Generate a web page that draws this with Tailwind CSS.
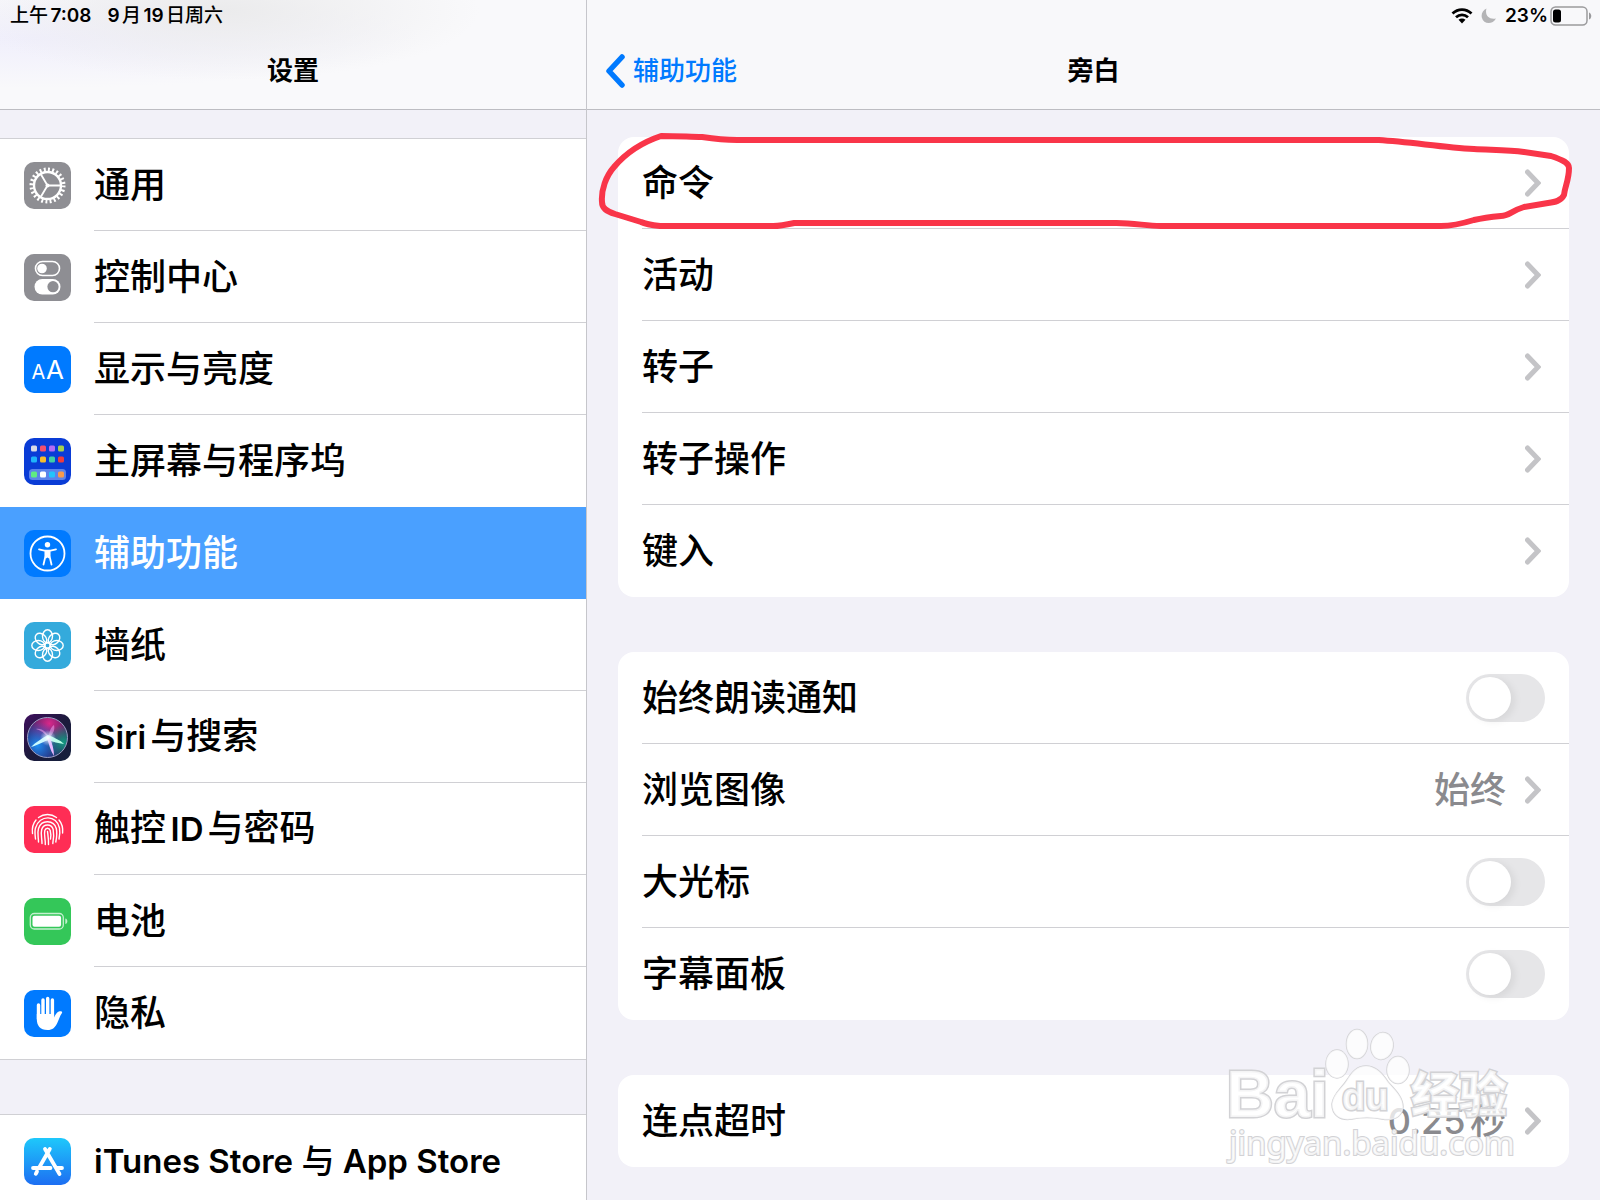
<!DOCTYPE html>
<html lang="zh-CN">
<head>
  <meta charset="UTF-8">
  <meta name="viewport" content="width=device-width, initial-scale=1.0">
  <title>设置</title>
  <script src="https://cdn.jsdelivr.net/npm/@tailwindcss/browser@4"></script>
</head>
<body class="bg-[#f2f1f8] text-black font-medium font-[Inter,'Noto_Sans_CJK_SC',sans-serif] [text-autospace:normal]">
  <div class="flex h-screen overflow-hidden">

    <!-- sidebar -->
    <aside class="w-[587px] shrink-0 flex flex-col border-r border-[#c6c6cb]">
      <header class="h-[110px] shrink-0 border-b border-[#bdbdc2] bg-[#f9f9fb] bg-[radial-gradient(ellipse_at_38%_10%,#ebebec,transparent_50%),radial-gradient(ellipse_at_5%_35%,#f0effc,transparent_50%)]">
        <div class="h-8 px-[10px] flex items-center gap-4 text-[19px] leading-8">
          <span>上午<span class="font-semibold">7:08</span></span>
          <span><span class="font-semibold">9</span>月<span class="font-semibold">19</span>日周六</span>
        </div>
        <h1 class="h-[77px] text-center text-[26px] leading-[77px] font-bold">设置</h1>
      </header>

      <nav class="flex flex-col pt-7 text-[36px] leading-[52px]">
        <ul class="bg-white border-y border-[#d0d0d4]">
          <li>
            <a href="#" class="flex items-center h-[92px] pl-6 gap-[23px]">
              <svg class="size-[47px] shrink-0" viewBox="0 0 47 47">
                <rect width="47" height="47" rx="10" fill="#8e8e93"/>
                <g fill="none" stroke="#fff">
                  <circle cx="23.500" cy="23.500" r="16" stroke-width="4" stroke-dasharray="1.900 2.289"/>
                  <circle cx="23.500" cy="23.500" r="13.500" stroke-width="2.400"/>
                  <path d="M23.500 23.500H36M23.500 23.500L17 12.500M23.500 23.500L17 34.500" stroke-width="1.800"/>
                </g>
                <circle cx="23.500" cy="23.500" r="2" fill="#fff"/>
              </svg>
              <span class="flex-1 h-full flex items-center border-b border-[#d0d0d4]">通用</span>
            </a>
          </li>
          <li>
            <a href="#" class="flex items-center h-[92px] pl-6 gap-[23px]">
              <svg class="size-[47px] shrink-0" viewBox="0 0 47 47">
                <rect width="47" height="47" rx="10" fill="#8e8e93"/>
                <rect x="11.500" y="7.500" width="24" height="14" rx="7" fill="none" stroke="#fff" stroke-width="1.600"/>
                <circle cx="18" cy="14.500" r="4.800" fill="#fff"/>
                <rect x="10.500" y="25" width="26" height="15.500" rx="7.700" fill="#fff"/>
                <circle cx="29" cy="32.700" r="5.600" fill="#8e8e93"/>
              </svg>
              <span class="flex-1 h-full flex items-center border-b border-[#d0d0d4]">控制中心</span>
            </a>
          </li>
          <li>
            <a href="#" class="flex items-center h-[92px] pl-6 gap-[23px]">
              <svg class="size-[47px] shrink-0" viewBox="0 0 47 47">
                <rect width="47" height="47" rx="10" fill="#007aff"/>
                <text x="7.500" y="33" fill="#fff" font-family="Inter" font-size="20" font-weight="400">A</text>
                <text x="22" y="33" fill="#fff" font-family="Inter" font-size="26" font-weight="400">A</text>
              </svg>
              <span class="flex-1 h-full flex items-center border-b border-[#d0d0d4]">显示与亮度</span>
            </a>
          </li>
          <li>
            <a href="#" class="flex items-center h-[92px] pl-6 gap-[23px]">
              <svg class="size-[47px] shrink-0" viewBox="0 0 47 47">
                <rect width="47" height="47" rx="10" fill="#0a3cd6"/>
                <rect x="5" y="31" width="37" height="11" rx="3.500" fill="#5b83ea"/>
                <rect x="7" y="7.500" width="6" height="6" rx="1.500" fill="#d9dbe6"/>
                <rect x="16" y="7.500" width="6" height="6" rx="1.500" fill="#f2506f"/>
                <rect x="25" y="7.500" width="6" height="6" rx="1.500" fill="#b36bf5"/>
                <rect x="34" y="7.500" width="6" height="6" rx="1.500" fill="#a6d14e"/>
                <rect x="7" y="18.500" width="6" height="6" rx="1.500" fill="#1fb4fa"/>
                <rect x="16" y="18.500" width="6" height="6" rx="1.500" fill="#f6bd2c"/>
                <rect x="25" y="18.500" width="6" height="6" rx="1.500" fill="#3fd0a4"/>
                <rect x="34" y="18.500" width="6" height="6" rx="1.500" fill="#f03c3c"/>
                <rect x="7" y="33.500" width="6" height="6" rx="1.500" fill="#5fec82"/>
                <rect x="16" y="33.500" width="6" height="6" rx="1.500" fill="#fff"/>
                <rect x="25" y="33.500" width="6" height="6" rx="1.500" fill="#22c4fb"/>
                <rect x="34" y="33.500" width="6" height="6" rx="1.500" fill="#f79a4b"/>
              </svg>
              <span>主屏幕与程序坞</span>
            </a>
          </li>
          <li>
            <a href="#" aria-current="page" class="flex items-center h-[92px] pl-6 gap-[23px] bg-[#4aa0ff] text-white">
              <svg class="size-[47px] shrink-0" viewBox="0 0 47 47">
                <rect width="47" height="47" rx="10" fill="#007aff"/>
                <circle cx="23.500" cy="23.500" r="17" fill="none" stroke="#fff" stroke-width="1.800"/>
                <circle cx="23.500" cy="14.700" r="2.700" fill="#fff"/>
                <path d="M15 19.300L21.500 20.800V26L19.500 34.500M32 19.300L25.500 20.800V26L27.500 34.500" fill="none" stroke="#fff" stroke-width="1.800" stroke-linecap="round" stroke-linejoin="round"/>
                <path d="M20.800 19.800H26.200V27L25 28.500L23.500 27.500L22 28.500L20.800 27Z" fill="#fff"/>
              </svg>
              <span>辅助功能</span>
            </a>
          </li>
          <li>
            <a href="#" class="flex items-center h-[92px] pl-6 gap-[23px]">
              <svg class="size-[47px] shrink-0" viewBox="0 0 47 47">
                <rect width="47" height="47" rx="10" fill="#34aadc"/>
                <g fill="none" stroke="#fff" stroke-width="1.400">
                  <ellipse cx="23.500" cy="14.300" rx="5" ry="6.500"/>
                  <ellipse cx="23.500" cy="14.300" rx="5" ry="6.500" transform="rotate(45 23.500 23.500)"/>
                  <ellipse cx="23.500" cy="14.300" rx="5" ry="6.500" transform="rotate(90 23.500 23.500)"/>
                  <ellipse cx="23.500" cy="14.300" rx="5" ry="6.500" transform="rotate(135 23.500 23.500)"/>
                  <ellipse cx="23.500" cy="14.300" rx="5" ry="6.500" transform="rotate(180 23.500 23.500)"/>
                  <ellipse cx="23.500" cy="14.300" rx="5" ry="6.500" transform="rotate(225 23.500 23.500)"/>
                  <ellipse cx="23.500" cy="14.300" rx="5" ry="6.500" transform="rotate(270 23.500 23.500)"/>
                  <ellipse cx="23.500" cy="14.300" rx="5" ry="6.500" transform="rotate(315 23.500 23.500)"/>
                  <circle cx="23.500" cy="23.500" r="2.700"/>
                </g>
              </svg>
              <span class="flex-1 h-full flex items-center border-b border-[#d0d0d4]">墙纸</span>
            </a>
          </li>
          <li>
            <a href="#" class="flex items-center h-[92px] pl-6 gap-[23px]">
              <svg class="size-[47px] shrink-0" viewBox="0 0 47 47">
                <defs>
                  <linearGradient id="siriBg" x1="0" y1="0" x2="1" y2="1">
                    <stop offset="0" stop-color="#3f0f5e"/>
                    <stop offset="0.500" stop-color="#1c1a3c"/>
                    <stop offset="1" stop-color="#14203c"/>
                  </linearGradient>
                  <radialGradient id="siriPink" cx="0.550" cy="0.150" r="0.600">
                    <stop offset="0" stop-color="#d8288a"/>
                    <stop offset="1" stop-color="#d8288a" stop-opacity="0"/>
                  </radialGradient>
                  <radialGradient id="siriBlue" cx="0.250" cy="0.700" r="0.600">
                    <stop offset="0" stop-color="#1e8ff0"/>
                    <stop offset="1" stop-color="#1e6ff0" stop-opacity="0"/>
                  </radialGradient>
                  <radialGradient id="siriGreen" cx="0.900" cy="0.620" r="0.450">
                    <stop offset="0" stop-color="#129a80"/>
                    <stop offset="1" stop-color="#129a80" stop-opacity="0"/>
                  </radialGradient>
                  <radialGradient id="siriGlow">
                    <stop offset="0" stop-color="#fff"/>
                    <stop offset="1" stop-color="#bfe6ff" stop-opacity="0"/>
                  </radialGradient>
                </defs>
                <rect width="47" height="47" rx="10" fill="url(#siriBg)"/>
                <circle cx="23.500" cy="23.500" r="20" fill="#2b1f5c"/>
                <circle cx="23.500" cy="23.500" r="20" fill="url(#siriPink)"/>
                <circle cx="23.500" cy="23.500" r="20" fill="url(#siriBlue)"/>
                <circle cx="23.500" cy="23.500" r="20" fill="url(#siriGreen)"/>
                <circle cx="23.500" cy="23.500" r="20" fill="none" stroke="#9b9fc4" stroke-width="1"/>
                <path d="M25 24C22 17 17 14 12 15C17 16 20 19 25 24C25 17 27 13 30 11C31 15 30 19 25 24Z" fill="#e79be8" opacity="0.600"/>
                <path d="M24 21C17 25 12 28 7 33C14 31 20 27 25 26Z" fill="#c9fbff"/>
                <path d="M24 21C31 24 36 26 40 30C34 29 29 28 24 26Z" fill="#b8ffe8"/>
                <path d="M23 24C25 30 26 36 30 42C30 35 28 29 26 24Z" fill="#e9b8ff"/>
                <circle cx="24" cy="24" r="8" fill="url(#siriGlow)"/>
              </svg>
              <span class="flex-1 h-full flex items-center border-b border-[#d0d0d4]"><span><span class="text-[33px] font-semibold">Siri</span>与搜索</span></span>
            </a>
          </li>
          <li>
            <a href="#" class="flex items-center h-[92px] pl-6 gap-[23px]">
              <svg class="size-[47px] shrink-0" viewBox="0 0 47 47">
                <rect width="47" height="47" rx="10" fill="#ff2d55"/>
                <g fill="none" stroke="#fff" stroke-width="1.400" stroke-linecap="round">
                  <path d="M14.500 11.500C20 7.500 27 7.500 32.500 11.500"/>
                  <path d="M8.500 27.500C7.800 22 9 17.500 12 14M35 14C38 17.500 39.200 21 38.600 27"/>
                  <path d="M11.500 33C11 29 10.500 25.500 11.500 22C15.500 8 33 9 35.500 22C36.200 26 35.800 29.500 35 33"/>
                  <path d="M14.500 36C14.500 31 13 27 14.500 22.500C17.500 13 30 14 32.300 22.500C33.300 27 32.600 32 31.800 36"/>
                  <path d="M18 37.500C18 32 16.500 28 17.700 23.500C19.500 17.500 27.500 17.500 29.200 23.500C30 28 29.700 33 28.800 37.500"/>
                  <path d="M21.300 38.500C21.500 33 19.800 28.500 20.800 24.500C21.800 21.500 25.200 21.500 26.200 24.500C27 27.500 27 30 26.500 33"/>
                  <path d="M23.500 25.500C24 30 24.800 34 24.500 38.500"/>
                </g>
              </svg>
              <span class="flex-1 h-full flex items-center border-b border-[#d0d0d4]"><span>触控<span class="text-[33px] font-semibold">ID</span>与密码</span></span>
            </a>
          </li>
          <li>
            <a href="#" class="flex items-center h-[92px] pl-6 gap-[23px]">
              <svg class="size-[47px] shrink-0" viewBox="0 0 47 47">
                <rect width="47" height="47" rx="10" fill="#34c759"/>
                <rect x="6.300" y="15.500" width="33" height="15.500" rx="4" fill="none" stroke="#c4f0cf" stroke-width="1.300"/>
                <rect x="8.500" y="17.700" width="28.600" height="11.100" rx="2" fill="#fff"/>
                <path d="M41.300 20.500C44 21 44 25.500 41.300 26Z" fill="#c4f0cf"/>
              </svg>
              <span class="flex-1 h-full flex items-center border-b border-[#d0d0d4]">电池</span>
            </a>
          </li>
          <li>
            <a href="#" class="flex items-center h-[92px] pl-6 gap-[23px]">
              <svg class="size-[47px] shrink-0" viewBox="0 0 47 47">
                <rect width="47" height="47" rx="10" fill="#007aff"/>
                <path d="M14.500 15V29M19 10V27M23.700 8.500V27M28.400 10V27" stroke="#fff" stroke-width="3.400" stroke-linecap="round"/>
                <path d="M12.800 24H30.100V27.500C31.500 24.500 33 22 35.500 21.300C37.500 20.800 38.800 22 37.800 23.300C35.800 26 35 29.500 33.500 32.500C31.300 37.500 28.500 40 23.500 40C16 40 12.800 35.500 12.800 29Z" fill="#fff"/>
              </svg>
              <span>隐私</span>
            </a>
          </li>
        </ul>

        <ul class="mt-[54px] bg-white border-t border-[#d0d0d4]">
          <li>
            <a href="#" class="flex items-center h-[92px] pl-6 gap-[23px]">
              <svg class="size-[47px] shrink-0" viewBox="0 0 47 47">
                <defs>
                  <linearGradient id="storeBg" x1="0" y1="0" x2="0" y2="1">
                    <stop offset="0" stop-color="#1ec8fb"/>
                    <stop offset="1" stop-color="#1d6ef2"/>
                  </linearGradient>
                </defs>
                <rect width="47" height="47" rx="10" fill="url(#storeBg)"/>
                <path d="M25.800 11L15.500 29M21 11L35.500 36M9 30H26.500M32.500 30H38M13 33.500L11.800 35.800" fill="none" stroke="#fff" stroke-width="3.800" stroke-linecap="round"/>
              </svg>
              <span class="text-[33px] font-semibold">iTunes Store <span class="font-medium">与</span> App Store</span>
            </a>
          </li>
        </ul>
      </nav>
    </aside>

    <!-- detail pane -->
    <main class="flex-1 min-w-0">
      <header class="h-[110px] border-b border-[#bdbdc2] bg-[#f8f8fa]">
        <div class="h-8 pr-2 flex items-center justify-end text-[19px] font-semibold">
          <svg class="w-[22px] h-4 mr-2" viewBox="0 0 22 16">
            <path d="M1.500 5.500C7 0.300 15 0.300 20.500 5.500M5 9.200C8.500 6 13.500 6 17 9.200" fill="none" stroke="#000" stroke-width="2.800"/>
            <path d="M7.500 11.800C9.500 10 12.500 10 14.500 11.800L11 15.500Z" fill="#000"/>
          </svg>
          <svg class="size-4 mr-2" viewBox="0 0 16 16">
            <path d="M5.500 0.500C3.500 7 8 12 15 10.500C11.500 17 2.500 16.500 0.800 9.500C0 5.500 2 2 5.500 0.500Z" fill="#b4b4b6"/>
          </svg>
          <span>23%</span>
          <svg class="w-[42px] h-5 ml-[2px]" viewBox="0 0 42 20">
            <rect x="1" y="1" width="36" height="18" rx="4.500" fill="none" stroke="#9a9a9c" stroke-width="1.500"/>
            <rect x="3" y="3.500" width="8" height="13" rx="2.500" fill="#000"/>
            <path d="M39 6.500C42 7.500 42 12.500 39 13.500Z" fill="#9a9a9c"/>
          </svg>
        </div>
        <div class="h-[77px] px-[18px] grid grid-cols-3 items-center text-[26px]">
          <a href="#" class="flex items-center gap-2 text-[#007aff]">
            <svg class="w-5 h-[34px]" viewBox="0 0 20 34">
              <path d="M17 3L4 17L17 31" fill="none" stroke="#007aff" stroke-width="5.500" stroke-linecap="round" stroke-linejoin="round"/>
            </svg>
            辅助功能
          </a>
          <h2 class="text-center font-bold">旁白</h2>
        </div>
      </header>

      <div class="pt-[27px] px-[31px] flex flex-col gap-[55px] text-[36px] leading-[52px]">
        <section class="relative bg-white rounded-2xl pl-6">
          <a href="#" class="flex items-center justify-between h-[92px] pr-7 border-b border-[#d0d0d4]">
            命令
            <svg class="w-4 h-7" viewBox="0 0 16 28"><path d="M2.500 3L13 14L2.500 25" fill="none" stroke="#c4c4c7" stroke-width="5" stroke-linecap="round"/></svg>
          </a>
          <a href="#" class="flex items-center justify-between h-[92px] pr-7 border-b border-[#d0d0d4]">
            活动
            <svg class="w-4 h-7" viewBox="0 0 16 28"><path d="M2.500 3L13 14L2.500 25" fill="none" stroke="#c4c4c7" stroke-width="5" stroke-linecap="round"/></svg>
          </a>
          <a href="#" class="flex items-center justify-between h-[92px] pr-7 border-b border-[#d0d0d4]">
            转子
            <svg class="w-4 h-7" viewBox="0 0 16 28"><path d="M2.500 3L13 14L2.500 25" fill="none" stroke="#c4c4c7" stroke-width="5" stroke-linecap="round"/></svg>
          </a>
          <a href="#" class="flex items-center justify-between h-[92px] pr-7 border-b border-[#d0d0d4]">
            转子操作
            <svg class="w-4 h-7" viewBox="0 0 16 28"><path d="M2.500 3L13 14L2.500 25" fill="none" stroke="#c4c4c7" stroke-width="5" stroke-linecap="round"/></svg>
          </a>
          <a href="#" class="flex items-center justify-between h-[92px] pr-7">
            键入
            <svg class="w-4 h-7" viewBox="0 0 16 28"><path d="M2.500 3L13 14L2.500 25" fill="none" stroke="#c4c4c7" stroke-width="5" stroke-linecap="round"/></svg>
          </a>

          <!-- hand-drawn mark around the first row -->
          <svg class="absolute -left-5 -top-[5px] w-[calc(100%+26px)] h-[100px] pointer-events-none" viewBox="598 132 976 100" preserveAspectRatio="none">
            <path d="M661 136C680 136 690 137 702 137C715 139 725 140 737 140L1378 140C1410 142 1440 147 1473 149C1490 150 1508 150 1523 152L1550 156C1562 160 1568 163 1568 168C1568 180 1564 186 1563 195C1560 201 1554 202 1547 203L1523 207C1510 211 1508 216 1500 216C1490 217 1482 218 1473 220C1460 224 1450 226 1440 226L1160 226C1145 226 1135 223 1116 223L794 223C785 225 780 226 773 226L660 226C650 225 645 224 641 222L615 214C606 211 602 208 602 202C601 190 606 176 614 167C625 154 640 143 661 136Z" fill="none" stroke="#f93549" stroke-width="6" stroke-linejoin="round" vector-effect="non-scaling-stroke"/>
          </svg>
        </section>

        <section class="bg-white rounded-2xl pl-6">
          <div class="flex items-center justify-between h-[92px] pr-6 border-b border-[#d0d0d4]">
            <label for="speakNotifications">始终朗读通知</label>
            <input type="checkbox" id="speakNotifications" role="switch" class="appearance-none flex items-center w-[79px] h-12 p-[3px] rounded-full bg-[#e6e6e8] checked:bg-[#34c759] checked:justify-end before:size-[42px] before:rounded-full before:bg-white before:shadow-[3px_2px_8px_rgba(0,0,0,0.08)]">
          </div>
          <a href="#" class="flex items-center h-[92px] pr-7 border-b border-[#d0d0d4]">
            <span class="flex-1">浏览图像</span>
            <span class="text-[#8a8a8e] mr-[19px]">始终</span>
            <svg class="w-4 h-7" viewBox="0 0 16 28"><path d="M2.500 3L13 14L2.500 25" fill="none" stroke="#c4c4c7" stroke-width="5" stroke-linecap="round"/></svg>
          </a>
          <div class="flex items-center justify-between h-[92px] pr-6 border-b border-[#d0d0d4]">
            <label for="largeCursor">大光标</label>
            <input type="checkbox" id="largeCursor" role="switch" class="appearance-none flex items-center w-[79px] h-12 p-[3px] rounded-full bg-[#e6e6e8] checked:bg-[#34c759] checked:justify-end before:size-[42px] before:rounded-full before:bg-white before:shadow-[3px_2px_8px_rgba(0,0,0,0.08)]">
          </div>
          <div class="flex items-center justify-between h-[92px] pr-6">
            <label for="captionPanel">字幕面板</label>
            <input type="checkbox" id="captionPanel" role="switch" class="appearance-none flex items-center w-[79px] h-12 p-[3px] rounded-full bg-[#e6e6e8] checked:bg-[#34c759] checked:justify-end before:size-[42px] before:rounded-full before:bg-white before:shadow-[3px_2px_8px_rgba(0,0,0,0.08)]">
          </div>
        </section>

        <section class="relative bg-white rounded-2xl pl-6">
          <a href="#" class="flex items-center h-[92px] pr-7">
            <span class="flex-1">连点超时</span>
            <span class="text-[#8a8a8e] mr-[19px]">0.25秒</span>
            <svg class="w-4 h-7" viewBox="0 0 16 28"><path d="M2.500 3L13 14L2.500 25" fill="none" stroke="#c4c4c7" stroke-width="5" stroke-linecap="round"/></svg>
          </a>

          <!-- watermark -->
          <svg class="absolute right-[49px] -top-[49px] w-[300px] h-[144px] overflow-visible pointer-events-none" viewBox="1220 1026 300 144">
            <g fill="#fff" fill-opacity="0.750" stroke="#d2d2d5" stroke-width="1.500" paint-order="stroke">
              <ellipse cx="1337" cy="1064" rx="11" ry="14"/>
              <ellipse cx="1357" cy="1044" rx="10.500" ry="14.500"/>
              <ellipse cx="1382" cy="1046" rx="11" ry="13.500" transform="rotate(12 1382 1046)"/>
              <ellipse cx="1398" cy="1070" rx="11" ry="13.500"/>
              <path d="M1366 1066C1376 1066 1383 1074 1388 1082C1395 1090 1403 1097 1403 1107C1402 1118 1392 1121 1382 1119C1372 1117 1362 1117 1352 1119C1340 1121 1332 1115 1332 1104C1333 1094 1342 1088 1347 1080C1352 1072 1357 1066 1366 1066Z"/>
              <text x="1226" y="1117" font-family="Liberation Sans" font-weight="700" font-size="66" stroke-width="3">Bai</text>
              <text x="1342" y="1110" font-family="Liberation Sans" font-weight="700" font-size="38" stroke-width="3">du</text>
              <text x="1411" y="1112" font-family="Noto Sans CJK SC" font-weight="900" font-size="48" stroke-width="3">经验</text>
              <text x="1229" y="1155" font-family="Noto Sans" font-weight="400" font-size="33" stroke-width="2">jingyan.baidu.com</text>
            </g>
          </svg>
        </section>
      </div>
    </main>

  </div>
</body>
</html>
